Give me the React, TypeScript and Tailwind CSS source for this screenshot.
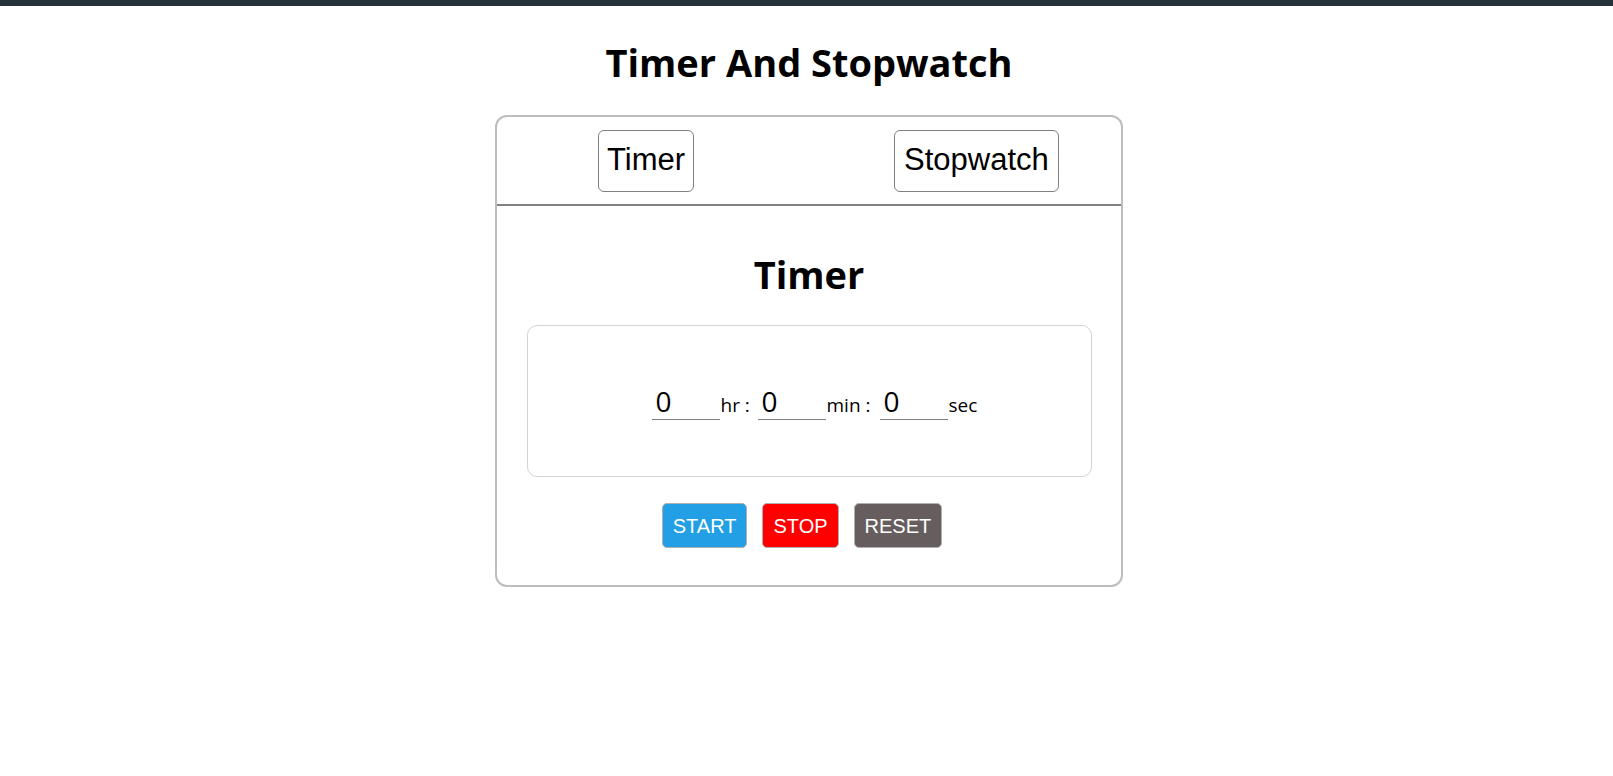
import { useState } from 'react';

const sans = "font-['Open_Sans','Noto_Sans',sans-serif]";
const arial = "font-['Liberation_Sans',Arial,sans-serif]";

const TimeInput = ({ value, onChange }: { value: string; onChange: (v: string) => void }) => (
  <input
    value={value}
    onChange={(e) => onChange(e.target.value)}
    className={`${sans} w-[68px] h-[38px] px-[4px] text-[28px] leading-[38px] text-black border-0 border-b border-[#808080] bg-transparent outline-none`}
  />
);

const App = () => {
  const [tab, setTab] = useState<'timer' | 'stopwatch'>('timer');
  const [hr, setHr] = useState('0');
  const [min, setMin] = useState('0');
  const [sec, setSec] = useState('0');

  return (
    <div className="bg-white min-h-screen">
      {/* Top bar */}
      <div className="h-[6px] bg-[#263238]" />

      <div className="pl-[5px]">
        <h1 className={`${sans} text-center text-[38px] leading-[46px] font-bold text-black mt-[33px] mb-[30px]`}>
          Timer And Stopwatch
        </h1>

        {/* Card */}
        <div className="mx-auto w-[628px] border-2 border-[#bdbdbd] rounded-[12px] bg-white">
          {/* Tabs */}
          <div className="flex items-center h-[87px] pl-[101px] gap-[200px]">
            <button
              onClick={() => setTab('timer')}
              className={`${arial} h-[62px] px-[8px] text-[31px] text-black bg-white border border-[#808080] rounded-[6px]`}
            >
              Timer
            </button>
            <button
              onClick={() => setTab('stopwatch')}
              className={`${arial} h-[62px] px-[9px] text-[31px] text-black bg-white border border-[#808080] rounded-[6px]`}
            >
              Stopwatch
            </button>
          </div>
          <div className="h-[2px] bg-[#808080]" />

          {/* Timer section */}
          <div className="flex flex-col items-center pb-[37px]">
            <h2 className={`${sans} text-[38px] leading-[46px] font-bold text-black mt-[45px] mb-[28px]`}>
              {tab === 'timer' ? 'Timer' : 'Stopwatch'}
            </h2>

            <div className="w-[565px] h-[152px] border border-[#d3d3d3] rounded-[10px] flex items-center justify-center pl-[10px]">
              <div className={`${sans} flex items-baseline text-[19px] text-black`}>
                <TimeInput value={hr} onChange={setHr} />
                <span className="w-[38px] pl-[1px]">hr :</span>
                <TimeInput value={min} onChange={setMin} />
                <span className="w-[54px] pl-[1px]">min :</span>
                <TimeInput value={sec} onChange={setSec} />
                <span className="w-[29px] pl-[1px]">sec</span>
              </div>
            </div>

            <div className={`${arial} flex gap-[15px] mt-[26px] pr-[14px]`}>
              <button className="h-[45px] px-[10px] text-[20px] text-white bg-[#229fe5] border border-[#b0b0b0] rounded-[5px]">
                START
              </button>
              <button className="h-[45px] px-[10px] text-[20px] text-white bg-[#ff0000] border border-[#b0b0b0] rounded-[5px]">
                STOP
              </button>
              <button className="h-[45px] px-[10px] text-[20px] text-white bg-[#665e5e] border border-[#b0b0b0] rounded-[5px]">
                RESET
              </button>
            </div>
          </div>
        </div>
      </div>
    </div>
  );
};

export default App;
